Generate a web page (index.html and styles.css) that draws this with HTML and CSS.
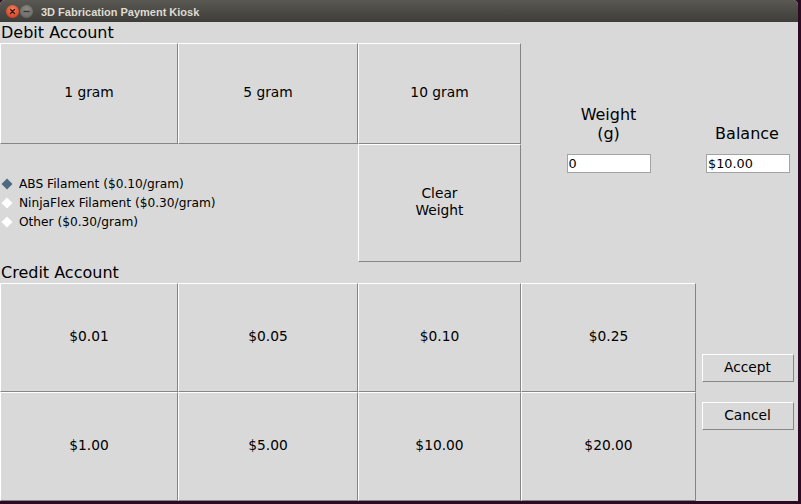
FILE: index.html
```html
<!DOCTYPE html>
<html lang="en">
<head>
  <meta charset="UTF-8">
  <title>3D Fabrication Payment Kiosk</title>
  <link rel="stylesheet" href="styles.css">
</head>
<body>
  <div class="window">
    <div class="titlebar">
      <span class="wbtn close">
        <svg width="13" height="13" viewBox="0 0 13 13"><path d="M4.5 4.5 L8.5 8.5 M8.5 4.5 L4.5 8.5" stroke="#3a1a10" stroke-width="1.4" stroke-linecap="round"/></svg>
      </span>
      <span class="wbtn minimize">
        <svg width="13" height="13" viewBox="0 0 13 13"><path d="M4 6.5 H9" stroke="#3a3935" stroke-width="1.4" stroke-linecap="round"/></svg>
      </span>
      <span class="title">3D Fabrication Payment Kiosk</span>
    </div>

    <div class="content">
      <div class="section-label debit-label">Debit Account</div>

      <button class="btn">1 gram</button>
      <button class="btn">5 gram</button>
      <button class="btn">10 gram</button>

      <div class="field-label weight-label">Weight<br>(g)</div>
      <div class="field-label balance-label">Balance</div>

      <div class="radios">
        <label class="radio">
          <svg width="12" height="12" viewBox="0 0 12 12"><polygon points="6,0.5 11.5,6 6,11.5 0.5,6" fill="#4f6882"/></svg>
          ABS Filament ($0.10/gram)
        </label>
        <label class="radio">
          <svg width="12" height="12" viewBox="0 0 12 12"><polygon points="6,0.5 11.5,6 6,11.5 0.5,6" fill="#ffffff"/></svg>
          NinjaFlex Filament ($0.30/gram)
        </label>
        <label class="radio">
          <svg width="12" height="12" viewBox="0 0 12 12"><polygon points="6,0.5 11.5,6 6,11.5 0.5,6" fill="#ffffff"/></svg>
          Other ($0.30/gram)
        </label>
      </div>

      <button class="btn clear-btn">Clear<br>Weight</button>

      <input class="entry weight-entry" type="text" value="0">
      <input class="entry balance-entry" type="text" value="$10.00">

      <div class="section-label credit-label">Credit Account</div>

      <button class="btn">$0.01</button>
      <button class="btn">$0.05</button>
      <button class="btn">$0.10</button>
      <button class="btn">$0.25</button>
      <button class="small-btn accept-btn">Accept</button>

      <button class="btn">$1.00</button>
      <button class="btn">$5.00</button>
      <button class="btn">$10.00</button>
      <button class="btn">$20.00</button>
      <button class="small-btn cancel-btn">Cancel</button>
    </div>
  </div>
</body>
</html>
```

FILE: styles.css
```css
body {
  margin: 0;
  padding: 0;
  background-color: #2c0a21;
  font-family: "DejaVu Sans", sans-serif;
  color: #000;
  width: 801px;
  height: 504px;
  overflow: hidden;
}

/* window frame */
.window {
  width: 798px;
  height: 501px;
  background-color: #d9d9d9;
  border-radius: 5px 5px 0 0;
  overflow: hidden;
}

.titlebar {
  height: 22px;
  display: flex;
  align-items: center;
  background: linear-gradient(#5a5852, #3e3d39);
  padding-left: 6px;
}

.wbtn {
  width: 13px;
  height: 13px;
  border-radius: 50%;
  display: flex;
  margin-right: 1px;
}

.close {
  background: radial-gradient(circle at 50% 35%, #f7835c, #d9472a 70%, #b9391f);
}

.minimize {
  background: radial-gradient(circle at 50% 35%, #8e8c86, #6d6b66 70%, #5b5954);
}

.title {
  margin-left: 7px;
  font-family: "Liberation Sans", Arial, sans-serif;
  font-weight: bold;
  font-size: 11px;
  color: #dfdbd2;
  padding-top: 1px;
}

/* main grid */
.content {
  display: grid;
  grid-template-columns: 178px 180px 163px 175px 102px;
  grid-template-rows: 21px 101px 118px 21px 109px 109px;
}

.section-label {
  grid-column: 1 / -1;
  font-size: 16px;
  line-height: 19px;
  padding-left: 1px;
  padding-top: 1px;
}

.btn {
  font-family: "DejaVu Sans", sans-serif;
  font-size: 13.8px;
  color: #000;
  background-color: #d9d9d9;
  border: 1px solid;
  border-color: #ffffff #858585 #858585 #ffffff;
  margin: 0;
  padding: 0 0 2px 0;
  line-height: 17px;
}

.clear-btn {
  grid-column: 3;
  grid-row: 3;
}

.field-label {
  font-size: 16px;
  line-height: 19px;
  text-align: center;
  align-self: end;
  padding-bottom: 1px;
}

.weight-label {
  grid-column: 4;
  grid-row: 2;
}

.balance-label {
  grid-column: 5;
  grid-row: 2;
}

/* radio list */
.radios {
  grid-column: 1 / 3;
  grid-row: 3;
  align-self: center;
  display: flex;
  flex-direction: column;
}

.radio {
  display: flex;
  align-items: center;
  font-size: 12.2px;
  line-height: 19px;
  height: 19px;
}

.radio svg {
  margin-left: 1px;
  margin-right: 6px;
}

/* entries */
.entry {
  grid-row: 3;
  align-self: start;
  justify-self: center;
  margin-top: 10px;
  width: 84px;
  height: 19px;
  box-sizing: border-box;
  border: 1px solid #a3a3a3;
  background: #fff;
  font-family: "DejaVu Sans", sans-serif;
  font-size: 12.8px;
  padding: 0 1px;
  color: #000;
  outline: none;
}

.weight-entry {
  grid-column: 4;
}

.balance-entry {
  grid-column: 5;
  margin-left: 2px;
}

.credit-label {
  grid-row: 4;
}

/* accept / cancel */
.small-btn {
  grid-column: 5;
  justify-self: center;
  width: 92px;
  height: 28px;
  margin: 0 0 0 1px;
  padding: 0 0 2px 0;
  font-family: "DejaVu Sans", sans-serif;
  font-size: 13.8px;
  color: #000;
  background-color: #d9d9d9;
  border: 1px solid;
  border-color: #ffffff #858585 #858585 #ffffff;
}

.accept-btn {
  grid-row: 5;
  align-self: end;
  margin-bottom: 10px;
}

.cancel-btn {
  grid-row: 6;
  align-self: start;
  margin-top: 10px;
}
```
